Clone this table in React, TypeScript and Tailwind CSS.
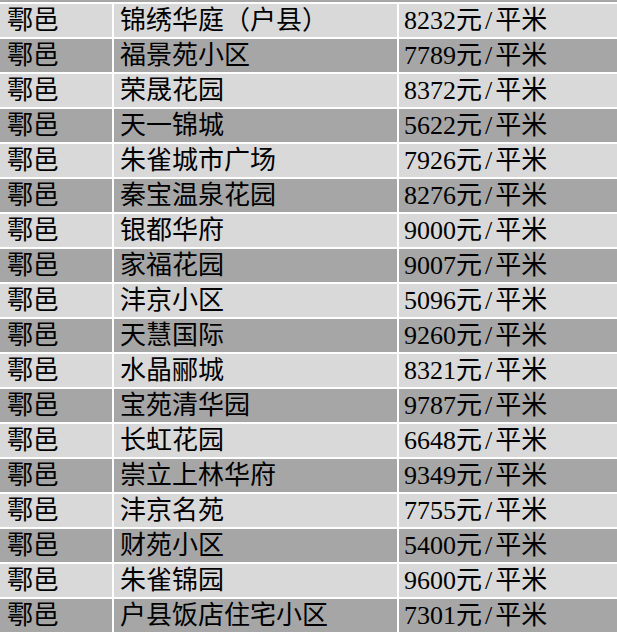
const rows: [string, string][] = [
  ["锦绣华庭（户县）", "8232"],
  ["福景苑小区", "7789"],
  ["荣晟花园", "8372"],
  ["天一锦城", "5622"],
  ["朱雀城市广场", "7926"],
  ["秦宝温泉花园", "8276"],
  ["银都华府", "9000"],
  ["家福花园", "9007"],
  ["沣京小区", "5096"],
  ["天慧国际", "9260"],
  ["水晶郦城", "8321"],
  ["宝苑清华园", "9787"],
  ["长虹花园", "6648"],
  ["崇立上林华府", "9349"],
  ["沣京名苑", "7755"],
  ["财苑小区", "5400"],
  ["朱雀锦园", "9600"],
  ["户县饭店住宅小区", "7301"],
];

export default function App() {
  return (
    <div
      className="w-[617px] h-[633px] overflow-hidden bg-white text-black text-[26px]"
      style={{ fontFamily: '"Liberation Serif", "Noto Sans CJK SC", serif' }}
    >
      <div className="h-[2px] bg-[#a6a6a6]"></div>
      <div className="mt-[2px] grid grid-cols-[112px_283px_1fr] gap-[2px]">
        {rows.map(([name, price], i) => {
          const bg = i % 2 === 0 ? "bg-[#d9d9d9]" : "bg-[#a6a6a6]";
          return (
            <div key={i} className="contents">
              <div className={`${bg} h-[33px] leading-[33px] pl-[7px] whitespace-nowrap`}>鄠邑</div>
              <div className={`${bg} h-[33px] leading-[33px] pl-[6px] whitespace-nowrap`}>{name}</div>
              <div className={`${bg} h-[33px] leading-[33px] pl-[5px] whitespace-nowrap`}>
                {price}元<span className="mx-[3px]">/</span>平米
              </div>
            </div>
          );
        })}
      </div>
    </div>
  );
}
